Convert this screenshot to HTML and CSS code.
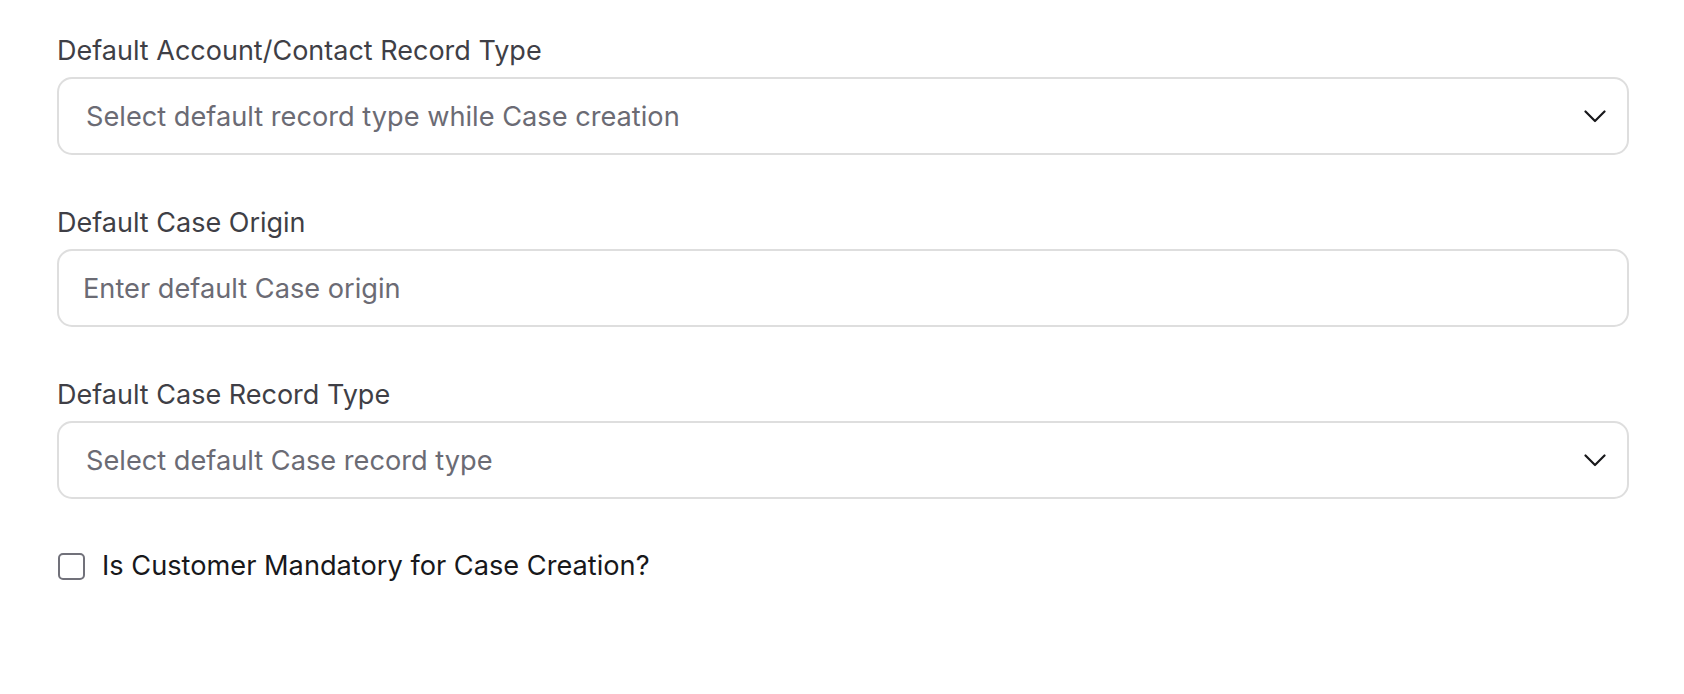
FILE: index.html
```html
<!DOCTYPE html>
<html lang="en">
<head>
<meta charset="utf-8">
<title>Case settings</title>
<link rel="stylesheet" href="styles.css">
</head>
<body>
<form class="form">
  <div class="field">
    <label class="label">Default Account/Contact Record Type</label>
    <div class="control select">
      <span class="placeholder">Select default record type while Case creation</span>
      <svg class="chevron" width="22" height="13" viewBox="0 0 22 13"><path d="M1.5 1.5 L11 11 L20.5 1.5" fill="none" stroke="#18181b" stroke-width="2.2" stroke-linecap="round" stroke-linejoin="round"/></svg>
    </div>
  </div>
  <div class="field">
    <label class="label">Default Case Origin</label>
    <input class="control input" type="text" placeholder="Enter default Case origin">
  </div>
  <div class="field">
    <label class="label">Default Case Record Type</label>
    <div class="control select">
      <span class="placeholder">Select default Case record type</span>
      <svg class="chevron" width="22" height="13" viewBox="0 0 22 13"><path d="M1.5 1.5 L11 11 L20.5 1.5" fill="none" stroke="#18181b" stroke-width="2.2" stroke-linecap="round" stroke-linejoin="round"/></svg>
    </div>
  </div>
  <label class="check">
    <span class="box"></span>
    <span class="check-text">Is Customer Mandatory for Case Creation?</span>
  </label>
</form>
</body>
</html>
```
FILE: styles.css
```css
* { box-sizing: border-box; }
html, body { margin: 0; background: #ffffff; }
body {
  font-family: Inter, "Noto Sans", "Liberation Sans", sans-serif;
}
.form {
  padding: 33px 55px 0 57px;
  display: flex;
  flex-direction: column;
}
.field {
  display: flex;
  flex-direction: column;
  margin-bottom: 50px;
}
.label {
  font-size: 27px;
  line-height: 36px;
  color: #3f3f46;
  margin-bottom: 8px;
}
.control {
  height: 78px;
  border: 2px solid #dedede;
  border-radius: 15px;
  background: #fff;
  font-family: Inter, "Noto Sans", "Liberation Sans", sans-serif;
  font-size: 27.2px;
  color: #18181b;
}
.select {
  display: flex;
  align-items: center;
  justify-content: space-between;
  padding: 0 21px 0 27px;
}
.placeholder { color: #6b6b74; }
.input {
  width: 100%;
  padding: 0 24px;
  outline: none;
}
.input::placeholder { color: #6b6b74; }
.chevron { display: block; }
.check {
  display: flex;
  align-items: center;
  gap: 17px;
  margin-top: -1px;
  padding-left: 1px;
}
.box {
  width: 27px;
  height: 27px;
  border: 2px solid #71717a;
  border-radius: 5px;
  flex: none;
}
.check-text {
  font-size: 27.2px;
  line-height: 36px;
  color: #18181b;
}
```
